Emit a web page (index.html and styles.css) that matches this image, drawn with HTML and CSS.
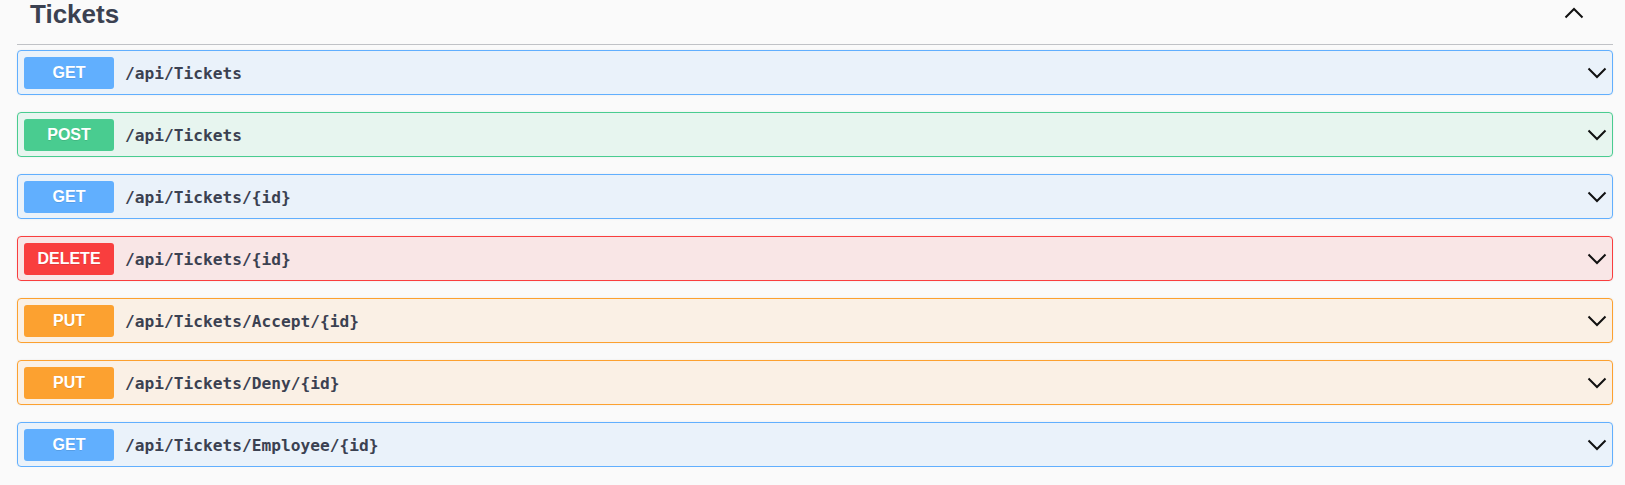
FILE: index.html
```html
<!DOCTYPE html>
<html lang="en">
<head>
<meta charset="utf-8">
<title>Tickets</title>
<link rel="stylesheet" href="styles.css">
</head>
<body>
<section class="tag-section">
  <h3 class="tag-header">
    <span class="tag-title">Tickets</span>
    <svg class="chev-up" width="20" height="12" viewBox="0 0 20 12"><path d="M1.5 10.5 L10 2 L18.5 10.5" fill="none" stroke="#111" stroke-width="2"/></svg>
  </h3>
  <div class="ops">
    <div class="op op-get"><span class="method">GET</span><span class="path">/api/Tickets</span><svg class="chev" width="20" height="12" viewBox="0 0 20 12"><path d="M1.5 1.5 L10 10 L18.5 1.5" fill="none" stroke="#111" stroke-width="2"/></svg></div>
    <div class="op op-post"><span class="method">POST</span><span class="path">/api/Tickets</span><svg class="chev" width="20" height="12" viewBox="0 0 20 12"><path d="M1.5 1.5 L10 10 L18.5 1.5" fill="none" stroke="#111" stroke-width="2"/></svg></div>
    <div class="op op-get"><span class="method">GET</span><span class="path">/api/Tickets/{id}</span><svg class="chev" width="20" height="12" viewBox="0 0 20 12"><path d="M1.5 1.5 L10 10 L18.5 1.5" fill="none" stroke="#111" stroke-width="2"/></svg></div>
    <div class="op op-delete"><span class="method">DELETE</span><span class="path">/api/Tickets/{id}</span><svg class="chev" width="20" height="12" viewBox="0 0 20 12"><path d="M1.5 1.5 L10 10 L18.5 1.5" fill="none" stroke="#111" stroke-width="2"/></svg></div>
    <div class="op op-put"><span class="method">PUT</span><span class="path">/api/Tickets/Accept/{id}</span><svg class="chev" width="20" height="12" viewBox="0 0 20 12"><path d="M1.5 1.5 L10 10 L18.5 1.5" fill="none" stroke="#111" stroke-width="2"/></svg></div>
    <div class="op op-put"><span class="method">PUT</span><span class="path">/api/Tickets/Deny/{id}</span><svg class="chev" width="20" height="12" viewBox="0 0 20 12"><path d="M1.5 1.5 L10 10 L18.5 1.5" fill="none" stroke="#111" stroke-width="2"/></svg></div>
    <div class="op op-get"><span class="method">GET</span><span class="path">/api/Tickets/Employee/{id}</span><svg class="chev" width="20" height="12" viewBox="0 0 20 12"><path d="M1.5 1.5 L10 10 L18.5 1.5" fill="none" stroke="#111" stroke-width="2"/></svg></div>
  </div>
</section>
</body>
</html>
```
FILE: styles.css
```css
html, body {
  margin: 0;
  padding: 0;
  background: #fafafa;
}
body {
  font-family: "Liberation Sans", Arial, sans-serif;
  color: #3b4151;
}
.tag-section {
  padding: 0 12px 0 17px;
}
.tag-header {
  margin: 0;
  height: 44px;
  box-sizing: content-box;
  border-bottom: 1px solid rgba(59, 65, 81, 0.3);
  display: flex;
  align-items: flex-start;
  justify-content: space-between;
  padding: 0 30px 0 13px;
}
.tag-title {
  font-size: 26px;
  line-height: 24px;
  font-weight: 700;
  color: #3b4151;
  padding-top: 2px;
}
.chev-up {
  margin-top: 7px;
  margin-right: -1px;
}
.ops {
  display: flex;
  flex-direction: column;
  gap: 17px;
  padding-top: 5px;
}
.op {
  height: 45px;
  box-sizing: border-box;
  border: 1px solid;
  border-radius: 4px;
  display: flex;
  align-items: center;
  padding: 0 5px 0 6px;
  box-shadow: 0 0 2px rgba(0, 0, 0, 0.08);
}
.method {
  width: 90px;
  height: 32px;
  border-radius: 3px;
  color: #fff;
  font-weight: 700;
  font-size: 16px;
  display: flex;
  align-items: center;
  justify-content: center;
  text-shadow: 0 1px 0 rgba(0, 0, 0, 0.1);
  flex: none;
}
.path {
  flex: 1;
  margin-left: 11px;
  font-family: "DejaVu Sans Mono", "Liberation Mono", monospace;
  font-weight: 700;
  font-size: 16.2px;
  color: #3b4151;
  padding-top: 1px;
}
.chev {
  flex: none;
}
.op-get { background: rgba(97, 175, 254, 0.1); border-color: #61affe; }
.op-get .method { background: #61affe; }
.op-post { background: rgba(73, 204, 144, 0.1); border-color: #49cc90; }
.op-post .method { background: #49cc90; }
.op-delete { background: rgba(249, 62, 62, 0.1); border-color: #f93e3e; }
.op-delete .method { background: #f93e3e; }
.op-put { background: rgba(252, 161, 48, 0.1); border-color: #fca130; }
.op-put .method { background: #fca130; }
```
